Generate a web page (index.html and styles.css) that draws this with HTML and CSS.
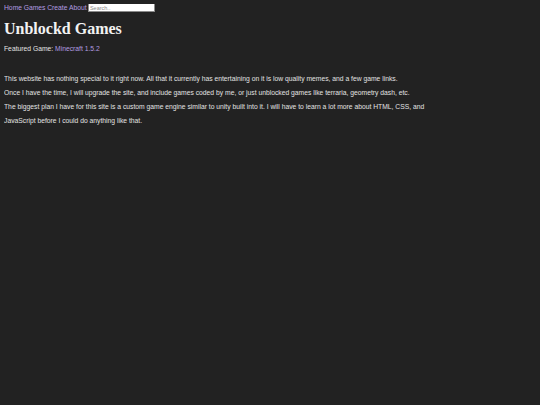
FILE: index.html
```html
<!DOCTYPE html>
<html>
<head>
<meta charset="utf-8">
<title>Unblockd Games</title>
<link rel="stylesheet" href="styles.css">
</head>
<body>
<nav class="nav">
<a href="#">Home</a>
<a href="#">Games</a>
<a href="#">Create</a>
<a href="#">About</a>
<input class="search" type="text" placeholder="Search..">
</nav>
<h1 class="title">Unblockd Games</h1>
<p class="featured">Featured Game: <a href="#">Minecraft 1.5.2</a></p>
<div class="content">
<p>This website has nothing special to it right now. All that it currently has entertaining on it is low quality memes, and a few game links.</p>
<p>Once I have the time, I will upgrade the site, and include games coded by me, or just unblocked games like terraria, geometry dash, etc.</p>
<p>The biggest plan I have for this site is a custom game engine similar to unity built into it. I will have to learn a lot more about HTML, CSS, and JavaScript before I could do anything like that.</p>
</div>
</body>
</html>
```
FILE: styles.css
```css
html { background: #222222; }
body {
  margin: 4px;
  background: #222222;
  color: #e2e2e2;
  font-family: "Liberation Sans", Arial, sans-serif;
  font-size: 6.75px;
}
a { color: #b29ce0; text-decoration: none; }
.nav { display: flex; align-items: center; height: 9px; margin-top: -1px; }
.nav a { margin-right: 1.7px; }
.search {
  margin-left: -0.5px;
  width: 67px;
  height: 9px;
  box-sizing: border-box;
  padding: 0 1px;
  border: 1px solid #8a8a8a;
  font-family: "Liberation Sans", Arial, sans-serif;
  font-size: 5.5px;
  background: #fff;
}
.search::placeholder { color: #8a8a8a; }
.title {
  font-family: "Liberation Serif", "Times New Roman", serif;
  font-weight: bold;
  font-size: 16px;
  margin: 8px 0 4px 0;
  color: #f2f2f2;
}
.featured { margin: 0 0 16px 0; line-height: 14px; }
.content { max-width: 440px; }
.content p { margin: 0; line-height: 14px; }
```
